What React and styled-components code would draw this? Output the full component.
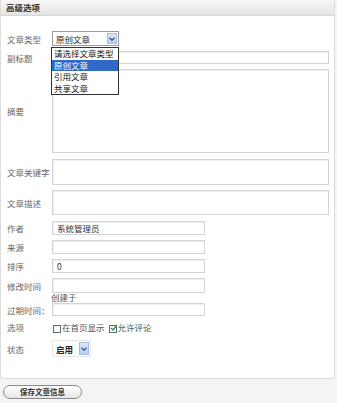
import React from 'react';
import styled, { createGlobalStyle } from 'styled-components';

const GlobalStyle = createGlobalStyle`
  body {
    margin: 0;
    background: #f4f4f4;
    font-family: "Noto Sans CJK SC", "Liberation Sans", sans-serif;
  }
`;

const Page = styled.div`
  width: 337px;
  height: 403px;
  overflow: hidden;
  background: #f4f4f4;
`;

const Panel = styled.div`
  width: 333px;
  background: #fff;
  border: 1px solid #dcdcdc;
  border-top: none;
  border-radius: 0 0 4px 4px;
  padding-bottom: 21px;
`;

const Header = styled.div`
  height: 15px;
  line-height: 15px;
  padding-left: 5px;
  font-size: 8.5px;
  font-weight: 700;
  color: #333;
  background: linear-gradient(#f7f7f7, #e4e4e4);
  border-bottom: 1px solid #d6d6d6;
`;

const Form = styled.div`
  display: flex;
  flex-direction: column;
  gap: 5px;
  padding: 15px 0 0 6px;
`;

const Row = styled.div`
  display: grid;
  grid-template-columns: 45px 1fr;
  align-items: ${p => (p.$top ? 'start' : 'center')};
  min-height: ${p => p.$h || 12}px;
  margin-top: ${p => p.$mt || 0}px;
`;

const Label = styled.div`
  font-size: 8.5px;
  color: #666;
  white-space: nowrap;
  line-height: ${p => p.$lh || 12}px;
`;

const TextInput = styled.div`
  box-sizing: border-box;
  width: ${p => (p.$short ? 153 : 277)}px;
  height: ${p => p.$h}px;
  border: 1px solid #d4d4d4;
  box-shadow: inset 1px 1px 0 #eee;
  background: #fff;
  font-size: 8.5px;
  color: #333;
  line-height: ${p => p.$h - 2}px;
  padding-left: 4px;
`;

const Note = styled.div`
  font-size: 8.5px;
  color: #555;
  line-height: 7px;
  height: 4px;
  margin: 1px 0 0 -1px;
  position: relative;
  z-index: 1;
`;

const SelectWrap = styled.div`
  position: relative;
  width: ${p => p.$w}px;
  height: ${p => p.$h}px;
`;

const SelectBox = styled.div`
  box-sizing: border-box;
  display: flex;
  align-items: center;
  justify-content: space-between;
  width: 100%;
  height: 100%;
  border: 1px solid ${p => (p.$plain ? '#e6e6e6' : '#9a9a9a')};
  background: #fff;
  padding: 1px 1px 1px 3px;
  font-size: 8.5px;
  font-weight: ${p => (p.$bold ? 700 : 400)};
  color: #222;
`;

const ArrowBtn = styled.div`
  width: 10px;
  height: 100%;
  display: flex;
  align-items: center;
  justify-content: center;
  background: linear-gradient(#dfe9f8, #b9cdee);
  border: 1px solid #a9bde0;
  box-sizing: border-box;
`;

const DropList = styled.div`
  position: absolute;
  top: 16px;
  left: -1px;
  width: 68px;
  box-sizing: border-box;
  border: 1px solid #333;
  background: #fff;
  z-index: 2;
`;

const DropItem = styled.div`
  height: 11.5px;
  line-height: 11.5px;
  padding-left: 2px;
  font-size: 8.5px;
  color: ${p => (p.$active ? '#fff' : '#111')};
  background: ${p => (p.$active ? '#3169c6' : '#fff')};
`;

const Options = styled.div`
  display: flex;
  align-items: flex-start;
  font-size: 8.5px;
  color: #555;
  line-height: 10px;
`;

const Check = styled.span`
  box-sizing: border-box;
  width: 8px;
  height: 8px;
  margin: 3px 1px 0 ${p => p.$ml || 0}px;
  border: 1px solid #5a6a80;
  background: #fff;
  position: relative;
  display: inline-block;
`;

const Footer = styled.div`
  padding: 6px 0 0 3px;
`;

const SaveButton = styled.button`
  display: block;
  width: 79px;
  height: 14px;
  padding: 0;
  border: 1px solid #8a8a8a;
  border-radius: 7px;
  background: linear-gradient(#ffffff, #e6e6e6);
  font-family: inherit;
  font-size: 7.5px;
  font-weight: 700;
  color: #333;
  line-height: 12px;
`;

const Chevron = () => (
  <svg width="6" height="4" viewBox="0 0 6 4">
    <path d="M0.5 0.8 L3 3.2 L5.5 0.8" fill="none" stroke="#2b4f91" strokeWidth="1.2" />
  </svg>
);

const Tick = () => (
  <svg width="8" height="8" viewBox="0 0 8 8" style={{ position: 'absolute', left: 0, top: -2 }}>
    <path d="M1 4 L3 6 L7 1" fill="none" stroke="#2a9a2a" strokeWidth="1.4" />
  </svg>
);

const types = ['请选择文章类型', '原创文章', '引用文章', '共享文章'];

export default function App() {
  return (
    <Page>
      <GlobalStyle />
      <Panel>
        <Header>高级选项</Header>
        <Form>
          <Row $h={15}>
            <Label>文章类型</Label>
            <SelectWrap $w={67} $h={15}>
              <SelectBox>
                <span>原创文章</span>
                <ArrowBtn><Chevron /></ArrowBtn>
              </SelectBox>
              <DropList>
                {types.map((t, i) => (
                  <DropItem key={t} $active={i === 1}>{t}</DropItem>
                ))}
              </DropList>
            </SelectWrap>
          </Row>
          <Row>
            <Label>副标题</Label>
            <TextInput $h={13} />
          </Row>
          <Row>
            <Label>摘要</Label>
            <TextInput $h={84} />
          </Row>
          <Row $mt={1}>
            <Label>文章关键字</Label>
            <TextInput $h={26} />
          </Row>
          <Row>
            <Label>文章描述</Label>
            <TextInput $h={25} />
          </Row>
          <Row $mt={1}>
            <Label>作者</Label>
            <TextInput $short $h={14}>系统管理员</TextInput>
          </Row>
          <Row>
            <Label>来源</Label>
            <TextInput $short $h={14} />
          </Row>
          <Row>
            <Label>排序</Label>
            <TextInput $short $h={14}>0</TextInput>
          </Row>
          <Row $top>
            <Label $lh={17}>修改时间</Label>
            <div>
              <TextInput $short $h={15} />
              <Note>创建于</Note>
            </div>
          </Row>
          <Row>
            <Label>过期时间：</Label>
            <TextInput $short $h={13} />
          </Row>
          <Row $h={12}>
            <Label>选项</Label>
            <Options>
              <Check $ml={1} />
              <span>在首页显示</span>
              <Check $ml={4}><Tick /></Check>
              <span>允许评论</span>
            </Options>
          </Row>
          <Row $h={16} $mt={2}>
            <Label>状态</Label>
            <SelectWrap $w={39} $h={17}>
              <SelectBox $plain $bold>
                <span>启用</span>
                <ArrowBtn><Chevron /></ArrowBtn>
              </SelectBox>
            </SelectWrap>
          </Row>
        </Form>
      </Panel>
      <Footer>
        <SaveButton>保存文章信息</SaveButton>
      </Footer>
    </Page>
  );
}
